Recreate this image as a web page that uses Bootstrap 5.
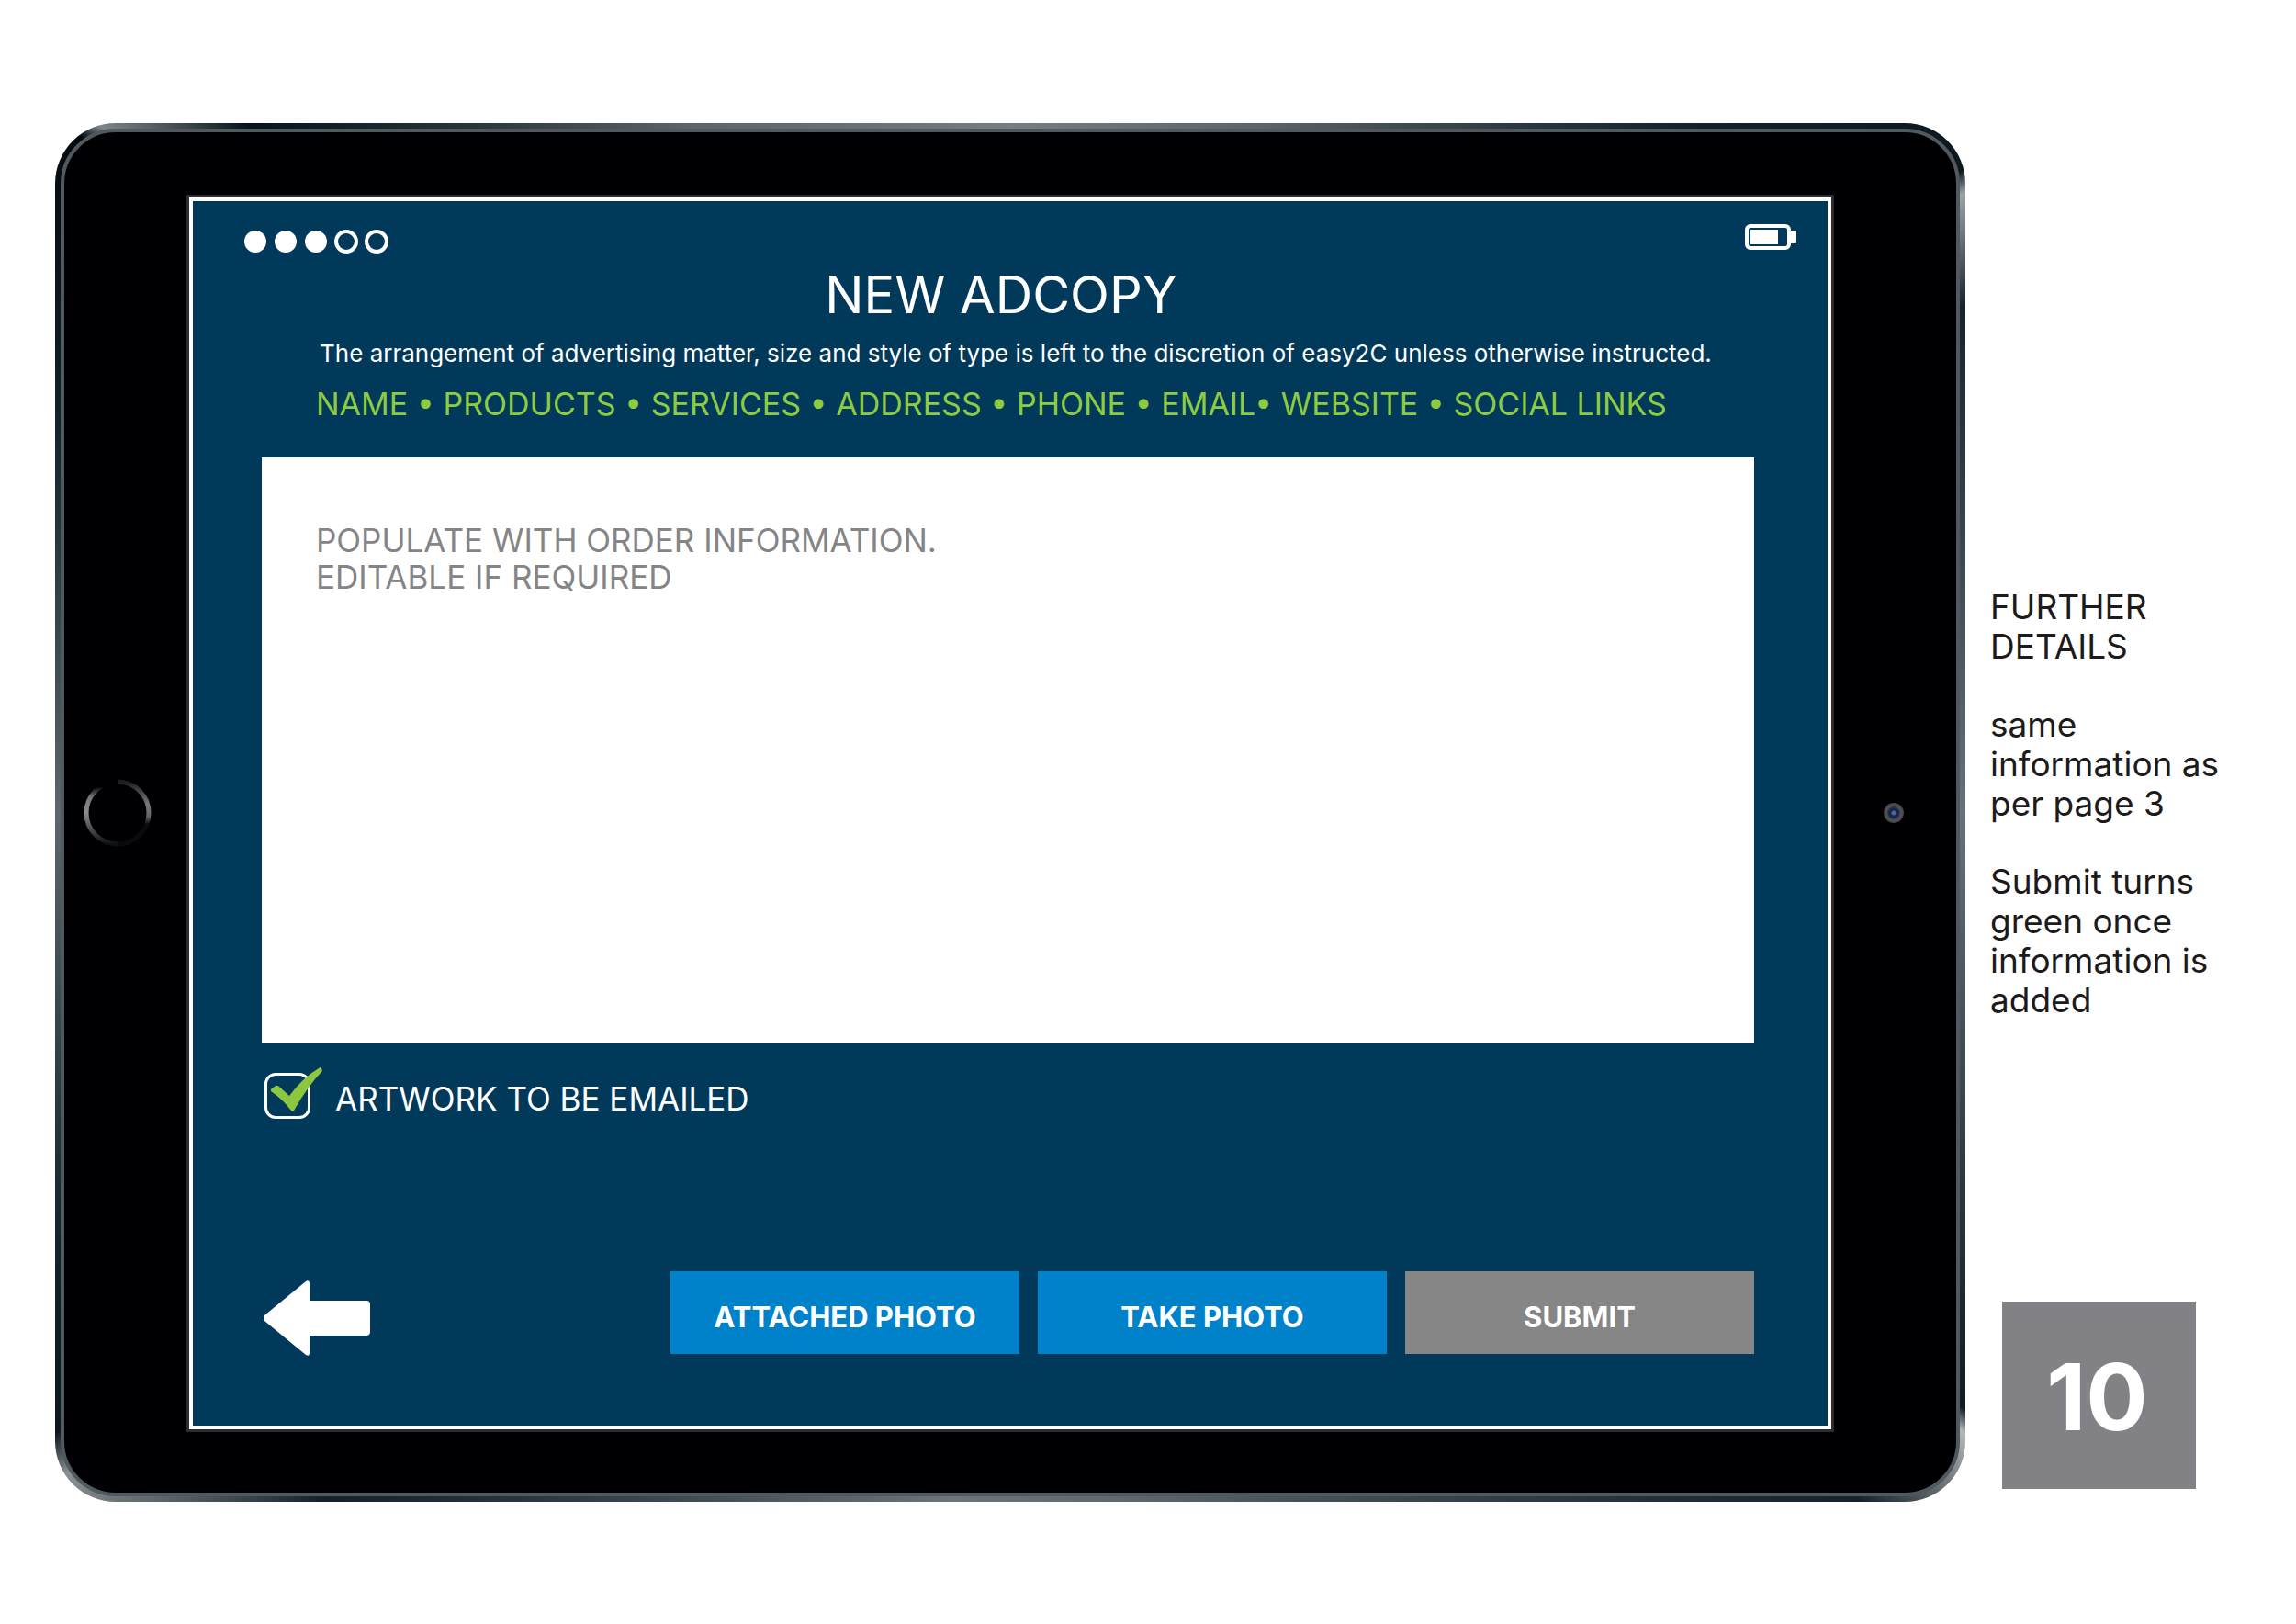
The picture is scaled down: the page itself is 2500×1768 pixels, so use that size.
<!DOCTYPE html>
<html lang="en">
<head>
<meta charset="utf-8">
<meta name="viewport" content="width=device-width, initial-scale=1">
<title>New Adcopy</title>
<link href="https://cdn.jsdelivr.net/npm/bootstrap@5.3.0/dist/css/bootstrap.min.css" rel="stylesheet">
<style>
  body { font-family: Inter, "Open Sans", sans-serif; background: #fff; color: #1c1a1b; font-weight: 400; }
  .board { padding: 134px 0 134px 60px; }
  /* metal edge of the tablet: light along the sides, dark at the corners */
  .tablet {
    padding: 6px; border-radius: 66px;
    background: conic-gradient(#777d81 0deg, #5c656a 20deg, #14212a 45deg, #0c171e 56deg, #9da3a5 57deg, #17242c 62deg, #67727a 90deg, #2a353c 112deg, #101b22 122deg, #b4b8b9 123deg, #16222a 129deg, #5d676d 170deg, #6d757a 185deg, #14212a 225deg, #8b9192 235deg, #0c171e 237deg, #14232c 246deg, #5d676d 270deg, #14232c 292deg, #04090d 306deg, #7e8689 307deg, #06131a 312deg, #5c656a 335deg, #777d81 360deg);
  }
  .bezel { background: #000003; border: 4px solid #4f595f; border-radius: 60px; }
  .bezel-side { width: 136px; }
  .bezel-home { padding-right: 20px; }
  .home-key { width: 74px; height: 74px; }
  .camera { width: 22px; height: 22px; border-radius: 50%; background: radial-gradient(circle, #4c6496 0 2px, #14264f 3px 5px, #2c3040 6px, #55565a 8px, #3c3d42 11px); }
  .screen { margin: 71px 0 69px; background: #00395a; border: 4px solid #fff; box-shadow: 0 0 0 3px #2c2c30; padding: 25px 80px 76px 75px; min-width: 0; }
  .status-row { margin: 0 -46px 15px -20px; }
  .dots { padding-top: 6px; gap: 7px; }
  .dot { width: 26px; height: 26px; border-radius: 50%; border: 4px solid #fff; }
  .dot-on { background: #fff; border-width: 0; width: 24px; height: 24px; margin: 1px; }
  .intro { padding: 0 14px 0 59px; }
  .screen-title { font-size: 56px; line-height: 60px; font-weight: 400; margin: 0 60px 16px 0; }
  .terms { font-size: 26px; line-height: 36px; margin-bottom: 15px; padding-left: 4px; white-space: nowrap; }
  .fields { font-size: 34px; line-height: 44px; margin-bottom: 36px; color: #8dcb41; white-space: nowrap; }
  .copy-box { height: 638px; padding: 70px 59px; border: 0; border-radius: 0; resize: none; font-size: 35px; line-height: 40px; color: #858587; }
  .copy-box:focus { color: #858587; }
  .art-row { margin: 32px 0 166px 3px; height: 50px; gap: 27px; }
  .art-label { font-size: 35px; line-height: 44px; padding-top: 6px; }
  .tick-wrap { width: 50px; height: 50px; }
  .tick-input { appearance: none; width: 50px; height: 50px; margin: 0; border: 3px solid #fff; border-radius: 12px; }
  .tick-mark { top: -7px; left: 0; pointer-events: none; visibility: hidden; }
  .tick-input:checked + .tick-mark { visibility: visible; }
  .back-link { margin-left: 2px; padding-top: 10px; line-height: 0; }
  .actions { gap: 20px; width: 1180px; }
  .action { flex: 1 1 0; height: 90px; padding: 10px 0 0; border: 0; border-radius: 0; color: #fff; background: #0082cb; font-size: 31px; line-height: 40px; font-weight: 700; }
  .action:hover { background: #0074b6; color: #fff; }
  .action:disabled { background: #868686; color: #fff; opacity: 1; }
  .notes { width: 360px; padding: 505px 40px 14px 27px; font-size: 37px; line-height: 43px; }
  .notes p { margin-bottom: 42px; }
  .page-no { width: 211px; height: 204px; margin-left: 13px; padding: 4px 4px 0 0; background: #828185; color: #fff; font-size: 100px; line-height: 100px; font-weight: 700; }
</style>
</head>
<body>
<div class="board d-flex">
  <main class="tablet flex-grow-1">
    <div class="bezel d-flex">
      <div class="bezel-side bezel-home d-flex align-items-center justify-content-center flex-shrink-0">
        <svg class="home-key" viewBox="0 0 74 74" aria-hidden="true">
          <defs>
            <linearGradient id="ringLeft" x1="0" y1="0" x2="0" y2="1"><stop offset="0" stop-color="#000003"/><stop offset=".08" stop-color="#000003"/><stop offset=".25" stop-color="#77777c"/><stop offset=".5" stop-color="#8b8b90"/><stop offset="1" stop-color="#0c1114"/></linearGradient>
            <linearGradient id="ringRight" x1="0" y1="0" x2="0" y2="1"><stop offset="0" stop-color="#1c1c20"/><stop offset=".35" stop-color="#77777c"/><stop offset=".55" stop-color="#66666b"/><stop offset=".68" stop-color="#0a0a0d"/></linearGradient>
          </defs>
          <path d="M37 3A34 34 0 0 0 37 71" fill="none" stroke="url(#ringLeft)" stroke-width="5"/>
          <path d="M37 3A34 34 0 0 1 37 71" fill="none" stroke="url(#ringRight)" stroke-width="5"/>
        </svg>
      </div>
      <section class="screen flex-grow-1 text-white">
        <div class="status-row d-flex justify-content-between align-items-start">
          <div class="dots d-flex">
            <span class="dot dot-on"></span><span class="dot dot-on"></span><span class="dot dot-on"></span><span class="dot"></span><span class="dot"></span>
          </div>
          <svg width="56" height="28" viewBox="0 0 56 28" aria-hidden="true">
            <rect x="2" y="2" width="46" height="24" rx="4" fill="none" stroke="#fff" stroke-width="4"/>
            <rect x="6" y="6" width="30" height="16" fill="#fff"/>
            <rect x="49" y="7" width="7" height="14" rx="1" fill="#fff"/>
          </svg>
        </div>
        <header class="intro">
          <h1 class="screen-title text-center">NEW ADCOPY</h1>
          <p class="terms">The arrangement of advertising matter, size and style of type is left to the discretion of easy2C unless otherwise instructed.</p>
          <p class="fields">NAME • PRODUCTS • SERVICES • ADDRESS • PHONE • EMAIL• WEBSITE • SOCIAL LINKS</p>
        </header>
        <textarea class="copy-box form-control shadow-none" aria-label="Ad copy">POPULATE WITH ORDER INFORMATION.
EDITABLE IF REQUIRED</textarea>
        <div class="art-row d-flex align-items-center">
          <div class="tick-wrap position-relative">
            <input class="tick-input" type="checkbox" id="artwork" checked>
            <svg class="tick-mark position-absolute" width="64" height="50" viewBox="0 0 64 50" aria-hidden="true">
              <path d="M7 27Q6 25 8 24L12 21Q14 20 16 22L27 32Q42 12 59 2Q61 0 62 2L63 5Q48 20 32 48Q31 50 29 48Q20 36 7 27Z" fill="#8dc63f"/>
            </svg>
          </div>
          <label class="art-label" for="artwork">ARTWORK TO BE EMAILED</label>
        </div>
        <div class="d-flex justify-content-between align-items-start">
          <a class="back-link" href="#" aria-label="Back">
            <svg width="116" height="82" viewBox="0 0 116 82" aria-hidden="true">
              <path d="M1 38L46 1Q50 -1 50 3V22H112Q116 22 116 26V56Q116 60 112 60H50V79Q50 83 46 81L1 44Q-1 41 1 38Z" fill="#fff"/>
            </svg>
          </a>
          <div class="actions d-flex">
            <button type="button" class="btn action">ATTACHED PHOTO</button>
            <button type="button" class="btn action">TAKE PHOTO</button>
            <button type="submit" class="btn action" disabled>SUBMIT</button>
          </div>
        </div>
      </section>
      <div class="bezel-side d-flex align-items-center justify-content-center flex-shrink-0">
        <span class="camera"></span>
      </div>
    </div>
  </main>
  <aside class="notes d-flex flex-column flex-shrink-0">
    <p>FURTHER<br>DETAILS</p>
    <p>same<br>information as<br>per page 3</p>
    <p>Submit turns<br>green once<br>information is<br>added</p>
    <div class="page-no d-flex align-items-center justify-content-center mt-auto">10</div>
  </aside>
</div>
<script src="https://cdn.jsdelivr.net/npm/bootstrap@5.3.0/dist/js/bootstrap.bundle.min.js"></script>
</body>
</html>
